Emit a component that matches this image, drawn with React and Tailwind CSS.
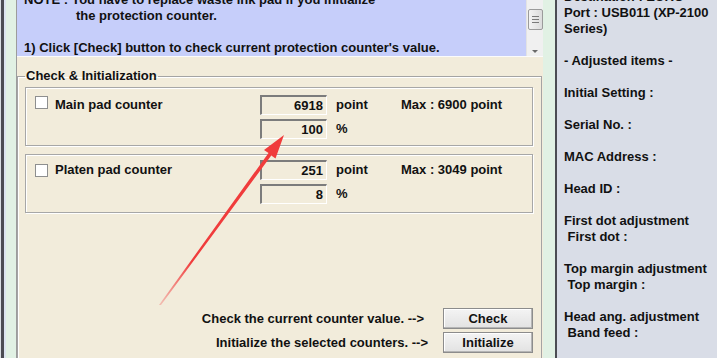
import React from "react";

const FONT = "font-['Liberation_Sans',Arial,sans-serif]";

const sideLines = [
  "Destination : EURO",
  "Port : USB011 (XP-2100",
  "Series)",
  "",
  "- Adjusted items -",
  "",
  "Initial Setting :",
  "",
  "Serial No. :",
  "",
  "MAC Address :",
  "",
  "Head ID :",
  "",
  "First dot adjustment",
  " First dot :",
  "",
  "Top margin adjustment",
  " Top margin :",
  "",
  "Head ang. adjustment",
  " Band feed :",
];

function Field({ value }) {
  return (
    <div className="flex h-[20px] w-[67px] items-center justify-end border-t-2 border-l-2 border-b border-r border-t-[#7c7c7c] border-l-[#7c7c7c] border-b-white border-r-white pr-[3px]">
      {value}
    </div>
  );
}

function CounterPanel({ label, value, pct, max, boxTop, className }) {
  return (
    <div
      className={`flex border border-[#a7a7a7] shadow-[inset_1px_1px_0_#fff,1px_1px_0_#fff] ${className}`}
    >
      <div className="flex w-[234px] items-start gap-[7px] pl-[9px]">
        <span className={`h-[13px] w-[13px] border border-[#8e8f8f] bg-white ${boxTop}`} />
        <span className="leading-[20px]">{label}</span>
      </div>
      <div className="flex flex-col gap-[4px]">
        <div className="flex h-[20px] items-center">
          <Field value={value} />
          <span className="ml-[9px] w-[65px]">point</span>
          <span>Max : {max} point</span>
        </div>
        <div className="flex h-[20px] items-center">
          <Field value={pct} />
          <span className="ml-[9px]">%</span>
        </div>
      </div>
    </div>
  );
}

function WinButton({ children }) {
  return (
    <button className="h-[21px] w-[90px] border border-[#8c8c8c] bg-gradient-to-b from-[#f4f4f4] to-[#e2e2e2] shadow-[inset_-1px_-1px_0_#b5b5b5,inset_1px_1px_0_#fff] text-[13px] font-bold leading-4 text-[#111]">
      {children}
    </button>
  );
}

function ScrollBar() {
  return (
    <div className="relative flex h-full w-[17px] flex-col items-center border-l border-[#e3e3e3] bg-[#f0f0f0]">
      <span className="mt-[-3px] h-0 w-0 border-x-[3px] border-b-[3px] border-x-transparent border-b-[#6a6a6a]" />
      <div className="mt-[9px] flex h-[21px] w-[15px] flex-col items-center justify-center gap-[2px] rounded-[2px] border border-[#9b9b9b] bg-gradient-to-r from-[#f3f3f3] to-[#dcdcdc]">
        <span className="h-px w-[7px] bg-[#7a7a7a]" />
        <span className="h-px w-[7px] bg-[#7a7a7a]" />
        <span className="h-px w-[7px] bg-[#7a7a7a]" />
      </div>
      <span className="mt-[20px] h-0 w-0 border-x-[3px] border-t-[3px] border-x-transparent border-t-[#6a6a6a]" />
    </div>
  );
}

function Arrow() {
  return (
    <svg className="pointer-events-none absolute left-0 top-0" width="717" height="358">
      <defs>
        <linearGradient id="fade" x1="160" y1="303" x2="284" y2="135" gradientUnits="userSpaceOnUse">
          <stop offset="0" stopColor="#f24a4a" stopOpacity="0.3" />
          <stop offset="0.25" stopColor="#f03c3c" stopOpacity="1" />
          <stop offset="1" stopColor="#f03c3c" />
        </linearGradient>
      </defs>
      <polygon
        points="159,305 268.5,153 264,150 284,135 275.5,158.5 271.3,155.5 161,305"
        fill="url(#fade)"
      />
    </svg>
  );
}

export default function App() {
  return (
    <div className={`relative flex h-[358px] w-[717px] overflow-hidden bg-[#f2ecdb] text-[13px] font-bold leading-4 text-[#111] ${FONT}`}>
      {/* left window edge */}
      <div className="flex h-full">
        <span className="w-px bg-[#d8dde2]" />
        <span className="w-[3px] bg-[#4b4c53]" />
        <span className="w-[2px] bg-[#dbe4ef]" />
        <span className="w-[10px] bg-[#e1f1e4]" />
        <span className="w-px bg-[#9c9c9c]" />
      </div>

      {/* main column */}
      <div className="flex w-[526px] flex-col">
        <div className="flex h-[62px] border-b border-[#fbfbfb]">
          <div className="flex-1 overflow-hidden bg-[#c6cefa] pl-[7px]">
            <div className="mt-[-8px] whitespace-pre">
              <div>NOTE : You have to replace waste ink pad if you initialize</div>
              <div className="pl-[52px]">the protection counter.</div>
              <div>&nbsp;</div>
              <div>1) Click [Check] button to check current protection counter's value.</div>
            </div>
          </div>
          <ScrollBar />
        </div>

        <fieldset className="mt-[11px] mr-px border border-[#a4a4a4] pl-[7px] pr-[8px] pt-[3px] shadow-[inset_1px_1px_0_#fff]">
          <legend className="px-[1px] leading-4">Check &amp; Initialization</legend>
          <CounterPanel
            label="Main pad counter"
            value="6918"
            pct="100"
            max="6900"
            boxTop="mt-px"
            className="pt-[7px] pb-[6px]"
          />
          <CounterPanel
            label="Platen pad counter"
            value="251"
            pct="8"
            max="3049"
            boxTop="mt-[4px]"
            className="mt-[8px] pt-[5px] pb-[8px]"
          />

          <div className="mt-[95px] flex flex-col gap-[3px]">
            <div className="flex items-center justify-end">
              <span className="mr-[19px]">Check the current counter value. --&gt;</span>
              <WinButton>Check</WinButton>
            </div>
            <div className="flex items-center justify-end">
              <span className="mr-[15px]">Initialize the selected counters. --&gt;</span>
              <WinButton>Initialize</WinButton>
            </div>
          </div>
          <div className="h-[20px]" />
        </fieldset>
      </div>

      {/* right window edge */}
      <div className="flex h-full">
        <span className="w-[12px] bg-[#e1f1e4]" />
        <span className="w-[2px] bg-[#4b4c53]" />
      </div>

      {/* info side panel */}
      <div className="flex-1 bg-[#d9dde7] pl-[7px]">
        <div className="mt-[-11px] whitespace-pre">
          {sideLines.map((line, i) => (
            <div key={i}>{line || "\u00a0"}</div>
          ))}
        </div>
      </div>

      <Arrow />
    </div>
  );
}
